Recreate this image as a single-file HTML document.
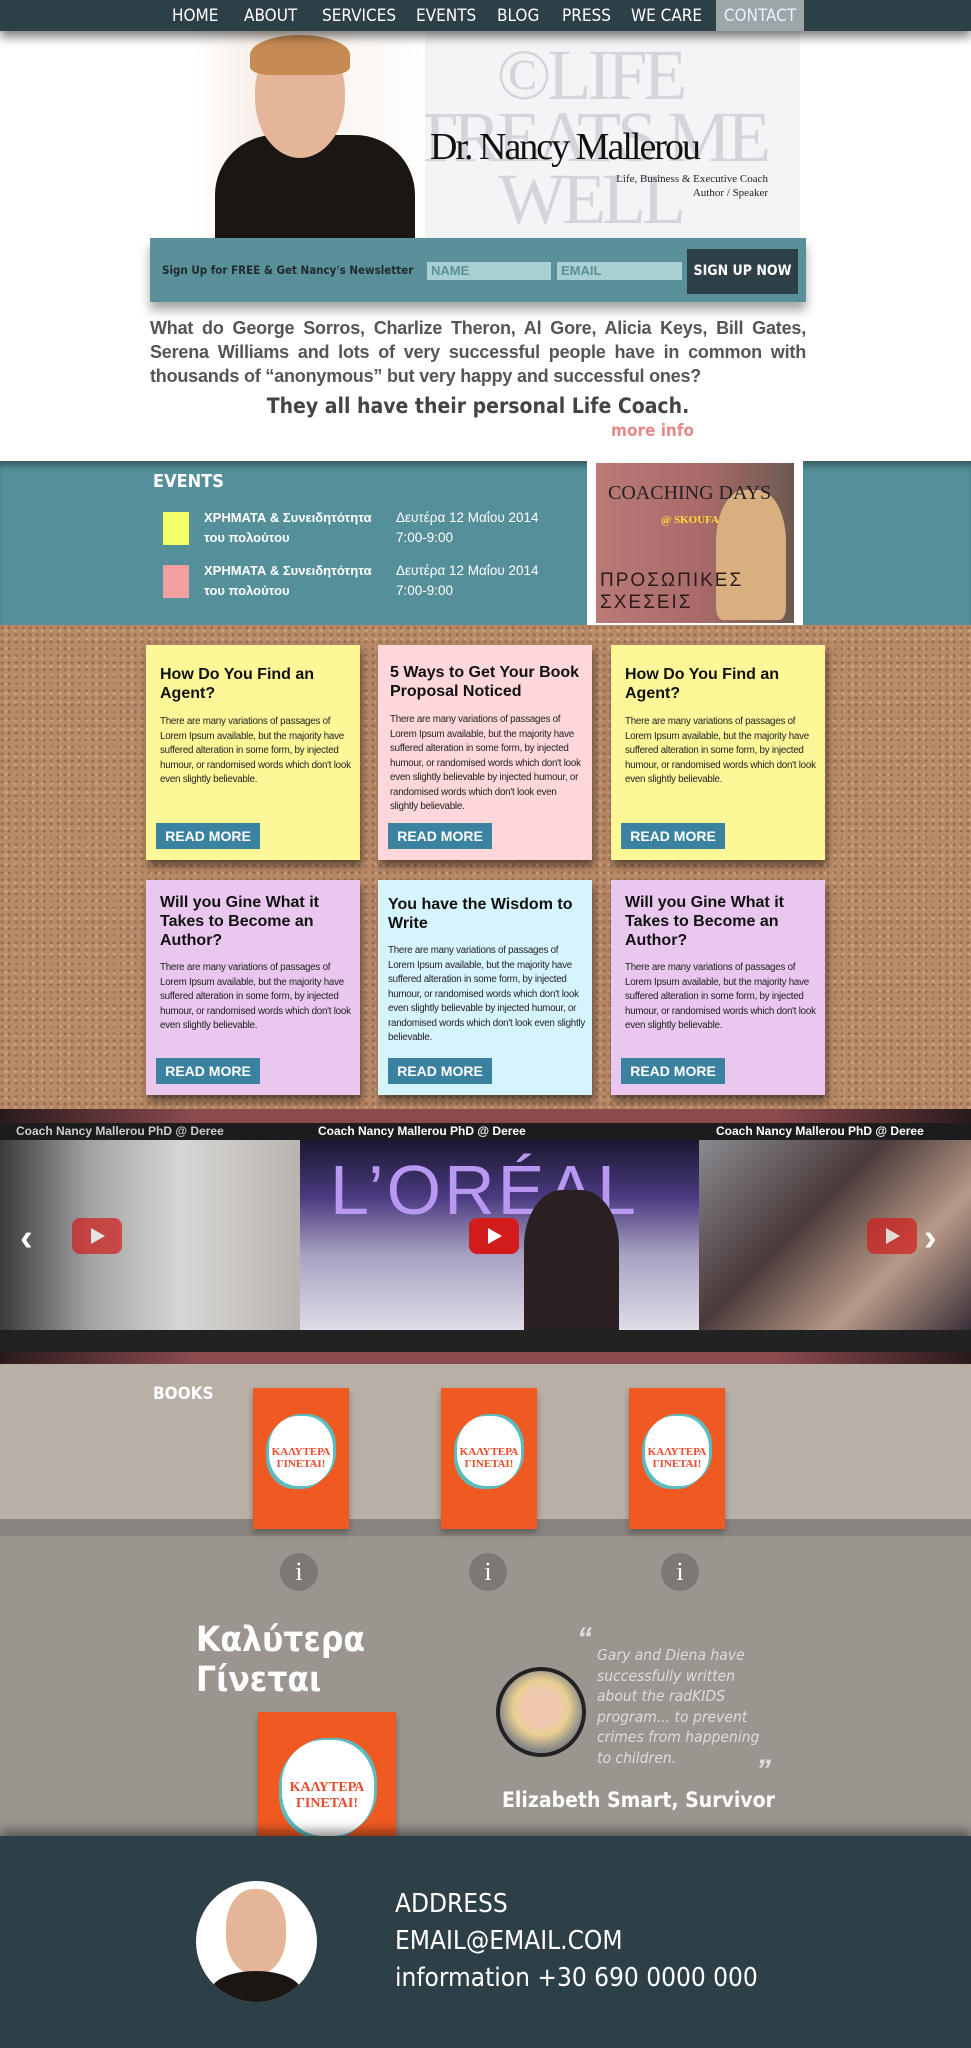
<!DOCTYPE html>
<html><head><meta charset="utf-8"><style>
*{margin:0;padding:0;box-sizing:border-box}
body{width:971px;height:2048px;position:relative;overflow:hidden;font-family:"Liberation Sans","DejaVu Sans",sans-serif;background:#fff}
.a{position:absolute}
.nav{top:0;left:0;width:971px;height:31px;background:#2d3f47;box-shadow:0 6px 10px rgba(0,0,0,.5);z-index:5}
.nav span{position:absolute;top:0;height:31px;line-height:33px;color:#fff;font-size:17px;font-family:"DejaVu Sans Condensed","Liberation Sans Narrow",sans-serif}
.note{position:absolute;width:214px;height:215px;box-shadow:2px 6px 8px rgba(0,0,0,.5)}
.note h3{position:absolute;left:14px;top:20px;right:8px;font-size:16px;line-height:19px;color:#111}
.note p{position:absolute;left:14px;right:6px;font-size:9.8px;line-height:14.5px;color:#222;letter-spacing:-.25px}
.note b{position:absolute;left:10px;bottom:11px;width:104px;height:26px;background:#3b82a0;color:#fff;font-size:14px;line-height:26px;text-align:center}
.book{position:absolute;width:96px;height:141px;background:#f05a22;box-shadow:0 4px 6px rgba(0,0,0,.3)}
.book .fl{position:absolute;left:16px;top:28px;width:64px;height:70px;background:#fff;border-radius:45%;box-shadow:-3px 3px 0 #5bbcc0,3px -2px 0 #5bbcc0}
.book .t{position:absolute;left:0;right:0;top:58px;text-align:center;color:#e84a2a;font-family:"Liberation Serif",serif;font-size:11px;font-weight:bold}
.info{position:absolute;top:1553px;width:38px;height:38px;border-radius:50%;background:#7b7875;color:#fff;font-size:26px;text-align:center;line-height:38px;font-family:"Liberation Serif",serif}
.vt{position:absolute;top:1124px;color:#fff;font-size:12px;font-weight:bold}
.play{position:absolute;top:1218px;width:50px;height:36px;background:#d21c1c;border-radius:8px}
.play:after{content:"";position:absolute;left:19px;top:10px;border-left:14px solid #fff;border-top:8px solid transparent;border-bottom:8px solid transparent}
</style></head><body>
<div class="a nav">
<span style="left:172px">HOME</span><span style="left:244px">ABOUT</span><span style="left:322px">SERVICES</span><span style="left:416px">EVENTS</span><span style="left:497px">BLOG</span><span style="left:562px">PRESS</span><span style="left:631px">WE CARE</span>
<span style="left:716px;width:88px;background:#9aa6a8;text-align:center;color:#eef">CONTACT</span>
</div>
<!-- header -->
<div class="a" style="left:376px;top:31px;width:424px;height:208px;background:#f4f3f6"></div>
<div class="a" style="left:380px;top:44px;width:420px;font-family:'Liberation Serif',serif;font-size:72px;line-height:62px;color:#d6d4da;text-align:center;letter-spacing:-4px;white-space:nowrap">©LIFE<br>TREATS ME<br>WELL</div>
<div class="a" style="left:195px;top:31px;width:230px;height:207px;background:linear-gradient(90deg,#fff 0,#f6ede6 30%,#fff 100%)"></div>
<div class="a" style="left:215px;top:135px;width:200px;height:103px;background:#1a1614;border-radius:60px 60px 0 0"></div>
<div class="a" style="left:255px;top:38px;width:90px;height:120px;background:#e4b596;border-radius:45% 45% 50% 50%"></div>
<div class="a" style="left:250px;top:35px;width:100px;height:40px;background:#c68a52;border-radius:50% 50% 20% 20%"></div>
<div class="a" style="left:430px;top:125px;font-family:'Liberation Serif',serif;font-size:38px;color:#111;letter-spacing:-2px">Dr. Nancy Mallerou</div>
<div class="a" style="left:600px;top:172px;width:168px;text-align:right;font-family:'Liberation Serif',serif;font-size:11px;line-height:14px;color:#222">Life, Business &amp; Executive Coach<br>Author / Speaker</div>
<div class="a" style="left:150px;top:238px;width:656px;height:64px;background:#5a9098;box-shadow:0 8px 10px rgba(0,0,0,.35)"></div>
<div class="a" style="left:162px;top:263px;font-size:11.5px;font-weight:bold;color:#1f2a2e;font-family:'DejaVu Sans Condensed',sans-serif">Sign Up for FREE &amp; Get Nancy's Newsletter</div>
<div class="a" style="left:427px;top:262px;width:124px;height:18px;background:#a8cfd2;color:#5a9098;font-size:13px;font-weight:bold;padding-left:4px;line-height:18px">NAME</div>
<div class="a" style="left:557px;top:262px;width:125px;height:18px;background:#a8cfd2;color:#5a9098;font-size:13px;font-weight:bold;padding-left:4px;line-height:18px">EMAIL</div>
<div class="a" style="left:687px;top:249px;width:111px;height:45px;background:#2d3f47;color:#fff;font-size:14px;font-weight:bold;text-align:center;line-height:45px;font-family:'DejaVu Sans Condensed',sans-serif">SIGN UP NOW</div>
<div class="a" style="left:150px;top:316px;width:656px;font-size:18px;line-height:24px;font-weight:bold;color:#555;text-align:justify;letter-spacing:-.2px">What do George Sorros, Charlize Theron, Al Gore, Alicia Keys, Bill Gates, Serena Williams and lots of very successful people have in common with thousands of “anonymous” but very happy and successful ones?</div>
<div class="a" style="left:150px;top:394px;width:656px;text-align:center;font-size:21px;font-weight:bold;color:#444;font-family:'DejaVu Sans Condensed',sans-serif">They all have their personal Life Coach.</div>
<div class="a" style="left:611px;top:421px;font-size:17px;font-weight:bold;color:#e48a8a;font-family:'DejaVu Sans Condensed',sans-serif">more info</div>
<!-- events -->
<div class="a" style="left:0;top:461px;width:971px;height:164px;background:#55909a;box-shadow:inset 0 8px 8px -4px rgba(0,0,0,.4)"></div>
<div class="a" style="left:153px;top:471px;color:#fff;font-size:18px;font-weight:bold;font-family:'DejaVu Sans Condensed',sans-serif">EVENTS</div>
<div class="a" style="left:163px;top:512px;width:26px;height:33px;background:#f2ff66"></div>
<div class="a" style="left:163px;top:565px;width:26px;height:33px;background:#f0a0a0"></div>
<div class="a" style="left:204px;top:508px;color:#fff;font-size:13px;font-weight:bold;line-height:20px">ΧΡΗΜΑΤΑ &amp; Συνειδητότητα<br>του πολούτου</div>
<div class="a" style="left:204px;top:561px;color:#fff;font-size:13px;font-weight:bold;line-height:20px">ΧΡΗΜΑΤΑ &amp; Συνειδητότητα<br>του πολούτου</div>
<div class="a" style="left:396px;top:508px;color:#fff;font-size:13.5px;line-height:20px">Δευτέρα 12 Μαΐου 2014<br>7:00-9:00</div>
<div class="a" style="left:396px;top:561px;color:#fff;font-size:13.5px;line-height:20px">Δευτέρα 12 Μαΐου 2014<br>7:00-9:00</div>
<div class="a" style="left:587px;top:461px;width:216px;height:164px;background:#fff"></div>
<div class="a" style="left:596px;top:463px;width:198px;height:160px;background:linear-gradient(90deg,#b97a78 0,#a86a68 55%,#6b5a50 100%)"></div>
<div class="a" style="left:716px;top:490px;width:70px;height:130px;background:#d8b080;border-radius:40% 40% 10% 10%"></div>
<div class="a" style="left:608px;top:482px;font-family:'Liberation Serif',serif;font-size:20px;color:#222">COACHING DAYS</div>
<div class="a" style="left:661px;top:514px;font-family:'Liberation Serif',serif;font-size:11px;color:#fd3;font-weight:bold">@ SKOUFA</div>
<div class="a" style="left:600px;top:570px;font-size:19px;color:#2a1a1a;line-height:22px;letter-spacing:2px">ΠΡΟΣΩΠΙΚΕΣ<br>ΣΧΕΣΕΙΣ</div>
<!-- cork -->
<div class="a" style="left:0;top:625px;width:971px;height:484px;background:#b98a68;background-image:radial-gradient(circle at 30% 40%,rgba(90,50,30,.35) 1px,transparent 2px),radial-gradient(circle at 70% 60%,rgba(240,210,180,.35) 1px,transparent 2px);background-size:7px 7px,9px 9px"></div>
<div class="note" style="left:146px;top:645px;background:#fdf798"><h3>How Do You Find an Agent?</h3><p style="top:70px">There are many variations of passages of Lorem Ipsum available, but the majority have suffered alteration in some form, by injected humour, or randomised words which don't look even slightly believable.</p><b>READ MORE</b></div>
<div class="note" style="left:378px;top:645px;background:#fed7da"><h3 style="left:12px;top:18px">5 Ways to Get Your Book Proposal Noticed</h3><p style="top:68px;left:12px">There are many variations of passages of Lorem Ipsum available, but the majority have suffered alteration in some form, by injected humour, or randomised words which don't look even slightly believable by injected humour, or randomised words which don't look even slightly believable.</p><b>READ MORE</b></div>
<div class="note" style="left:611px;top:645px;background:#fdf798"><h3>How Do You Find an Agent?</h3><p style="top:70px">There are many variations of passages of Lorem Ipsum available, but the majority have suffered alteration in some form, by injected humour, or randomised words which don't look even slightly believable.</p><b>READ MORE</b></div>
<div class="note" style="left:146px;top:880px;background:#e9c7ef"><h3 style="top:13px">Will you Gine What it Takes to Become an Author?</h3><p style="top:81px">There are many variations of passages of Lorem Ipsum available, but the majority have suffered alteration in some form, by injected humour, or randomised words which don't look even slightly believable.</p><b>READ MORE</b></div>
<div class="note" style="left:378px;top:880px;background:#d6f4fd"><h3 style="left:10px;top:15px">You have the Wisdom to Write</h3><p style="top:64px;left:10px">There are many variations of passages of Lorem Ipsum available, but the majority have suffered alteration in some form, by injected humour, or randomised words which don't look even slightly believable by injected humour, or randomised words which don't look even slightly believable.</p><b>READ MORE</b></div>
<div class="note" style="left:611px;top:880px;background:#e9c7ef"><h3 style="top:13px">Will you Gine What it Takes to Become an Author?</h3><p style="top:81px">There are many variations of passages of Lorem Ipsum available, but the majority have suffered alteration in some form, by injected humour, or randomised words which don't look even slightly believable.</p><b>READ MORE</b></div>
<!-- video -->
<div class="a" style="left:0;top:1109px;width:971px;height:255px;background:linear-gradient(90deg,#2a1a1c,#8a4a4e 20%,#8a4a4e 80%,#2a1a1c);box-shadow:0 6px 10px rgba(0,0,0,.5)"></div>
<div class="a" style="left:0;top:1123px;width:971px;height:210px;background:#1c1c1e"></div>
<div class="a" style="left:0;top:1140px;width:300px;height:190px;background:linear-gradient(90deg,#3a3a3a,#a5a2a2 30%,#d8d6d4 60%,#b8b4b0)"></div>
<div class="a" style="left:300px;top:1140px;width:399px;height:190px;background:linear-gradient(180deg,#1a1830 0,#4a3a80 30%,#a8a0c0 60%,#e0dce8 100%)"></div>
<div class="a" style="left:330px;top:1150px;font-size:70px;color:#b898f0;font-family:'Liberation Sans',sans-serif;letter-spacing:3px">L’ORÉAL</div>
<div class="a" style="left:524px;top:1190px;width:95px;height:140px;background:#2a2022;border-radius:40% 40% 0 0"></div>
<div class="a" style="left:699px;top:1140px;width:272px;height:190px;background:linear-gradient(135deg,#8a8a90,#4a3a3a 40%,#b89a88 70%,#3a3038)"></div>
<div class="vt" style="left:16px;color:#ccc">Coach Nancy Mallerou PhD @ Deree</div>
<div class="vt" style="left:318px">Coach Nancy Mallerou PhD @ Deree</div>
<div class="vt" style="left:716px">Coach Nancy Mallerou PhD @ Deree</div>
<div class="a" style="left:0;top:1330px;width:971px;height:22px;background:#222"></div>
<div class="play" style="left:72px;opacity:.7"></div><div class="play" style="left:469px"></div><div class="play" style="left:867px;opacity:.7"></div>
<div class="a" style="left:20px;top:1218px;color:#fff;font-size:38px;font-weight:bold;line-height:40px">‹</div>
<div class="a" style="left:924px;top:1218px;color:#fff;font-size:38px;font-weight:bold;line-height:40px">›</div>
<!-- books -->
<div class="a" style="left:0;top:1364px;width:971px;height:155px;background:#b8b0a6"></div>
<div class="a" style="left:0;top:1519px;width:971px;height:17px;background:#89847f"></div>
<div class="a" style="left:0;top:1536px;width:971px;height:300px;background:#9b958f"></div>
<div class="a" style="left:153px;top:1384px;color:#fff;font-size:17px;font-weight:bold;font-family:'DejaVu Sans Condensed',sans-serif">BOOKS</div>
<div class="book" style="left:253px;top:1388px"><div class="fl"></div><div class="t">ΚΑΛΥΤΕΡΑ<br>ΓΙΝΕΤΑΙ!</div></div>
<div class="book" style="left:441px;top:1388px"><div class="fl"></div><div class="t">ΚΑΛΥΤΕΡΑ<br>ΓΙΝΕΤΑΙ!</div></div>
<div class="book" style="left:629px;top:1388px"><div class="fl"></div><div class="t">ΚΑΛΥΤΕΡΑ<br>ΓΙΝΕΤΑΙ!</div></div>
<div class="info" style="left:280px">i</div><div class="info" style="left:469px">i</div><div class="info" style="left:661px">i</div>
<div class="a" style="left:196px;top:1620px;color:#fff;font-size:35px;font-weight:bold;line-height:40px;font-family:'DejaVu Sans Condensed',sans-serif">Καλύτερα<br>Γίνεται</div>
<div class="book" style="left:258px;top:1712px;width:138px;height:124px"><div class="fl" style="left:24px;top:28px;width:92px;height:96px"></div><div class="t" style="top:68px;font-size:14px">ΚΑΛΥΤΕΡΑ<br>ΓΙΝΕΤΑΙ!</div></div>
<div class="a" style="left:496px;top:1667px;width:90px;height:90px;border-radius:50%;background:#222;padding:4px"><div style="width:82px;height:82px;border-radius:50%;background:radial-gradient(circle at 50% 45%,#f0c8b0 0,#f0c8b0 30%,#e8d090 45%,#888 70%)"></div></div>
<div class="a" style="left:577px;top:1622px;color:#ddd;font-size:30px;font-style:italic;font-weight:bold">“</div>
<div class="a" style="left:597px;top:1645px;color:#ddd;font-size:15.5px;font-style:italic;line-height:20.5px;font-family:'DejaVu Sans Condensed',sans-serif;white-space:nowrap">Gary and Diena have<br>successfully written<br>about the radKIDS<br>program... to prevent<br>crimes from happening<br>to children.</div>
<div class="a" style="left:756px;top:1756px;color:#ddd;font-size:30px;font-style:italic;font-weight:bold;line-height:30px">”</div>
<div class="a" style="left:502px;top:1788px;color:#fff;font-size:21px;font-weight:bold;font-family:'DejaVu Sans Condensed',sans-serif">Elizabeth Smart, Survivor</div>
<!-- footer -->
<div class="a" style="left:0;top:1836px;width:971px;height:212px;background:#2d3f47;box-shadow:0 -6px 10px rgba(0,0,0,.4)"></div>
<div class="a" style="left:196px;top:1881px;width:121px;height:121px;border-radius:50%;background:#fff;overflow:hidden"><div style="position:absolute;left:30px;top:8px;width:60px;height:85px;background:#e4b596;border-radius:45%"></div><div style="position:absolute;left:15px;top:90px;width:90px;height:40px;background:#1a1614;border-radius:50% 50% 0 0"></div></div>
<div class="a" style="left:395px;top:1886px;color:#fff;font-size:26px;line-height:37px;font-family:'DejaVu Sans Condensed',sans-serif">ADDRESS<br>EMAIL@EMAIL.COM<br>information +30 690 0000 000</div>
</body></html>
